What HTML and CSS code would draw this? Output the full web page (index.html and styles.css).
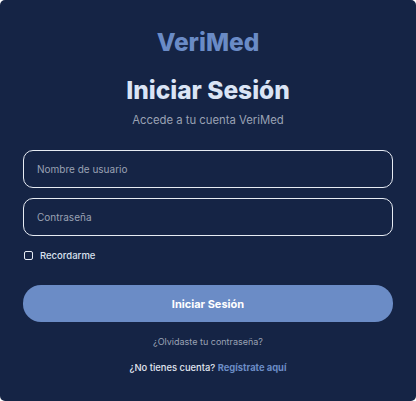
FILE: index.html
```html
<!DOCTYPE html>
<html lang="es">
<head>
<meta charset="utf-8">
<link rel="stylesheet" href="styles.css">
</head>
<body>
<div class="card">
  <div class="brand">VeriMed</div>
  <h1 class="title">Iniciar Sesión</h1>
  <p class="subtitle">Accede a tu cuenta VeriMed</p>
  <form class="form">
    <div class="field"><span class="placeholder">Nombre de usuario</span></div>
    <div class="field"><span class="placeholder">Contraseña</span></div>
    <label class="remember"><span class="box"></span>Recordarme</label>
    <button type="button" class="btn">Iniciar Sesión</button>
  </form>
  <p class="forgot">¿Olvidaste tu contraseña?</p>
  <p class="signup">¿No tienes cuenta? <a class="link">Regístrate aquí</a></p>
</div>
</body>
</html>
```
FILE: styles.css
```css
* { box-sizing: border-box; }
html, body { margin: 0; padding: 0; background: #ffffff; }
body { font-family: Inter, "Noto Sans", sans-serif; }
.card {
  width: 416px;
  height: 401px;
  background: #152445;
  border-radius: 5px;
  padding: 27px 23px 0;
  display: flex;
  flex-direction: column;
  align-items: stretch;
}
.brand {
  text-align: center;
  font-size: 24.5px;
  font-weight: 800;
  color: #6a8bc6;
  line-height: 30px;
}
.title {
  margin: 18px 0 0;
  text-align: center;
  font-size: 24.5px;
  font-weight: 800;
  color: #dae4f5;
  line-height: 30px;
}
.subtitle {
  margin: 8px 0 0;
  text-align: center;
  font-size: 11.3px;
  color: #9aa2b4;
  line-height: 14px;
}
.form {
  margin-top: 23px;
  display: flex;
  flex-direction: column;
}
.field {
  height: 38px;
  border: 1px solid #e6ebf3;
  border-radius: 10px;
  padding: 0 13px;
  display: flex;
  align-items: center;
  margin-bottom: 10px;
}
.placeholder {
  font-size: 10px;
  color: #9aa2b4;
}
.remember {
  display: flex;
  align-items: center;
  gap: 7px;
  font-size: 9.5px;
  font-weight: 500;
  color: #d9e1ef;
  margin-top: 2px;
  height: 15px;
}
.box {
  width: 9px;
  height: 9px;
  border: 1px solid #e6ebf3;
  border-radius: 2px;
  margin-left: 1px;
}
.btn {
  margin-top: 22px;
  height: 37px;
  border: none;
  border-radius: 18px;
  background: #6b8cc6;
  color: #ffffff;
  font-family: inherit;
  font-size: 11px;
  font-weight: 700;
}
.forgot {
  margin: 14px 0 0;
  text-align: center;
  font-size: 9px;
  color: #9aa2b4;
  line-height: 12px;
}
.signup {
  margin: 14px 0 0;
  text-align: center;
  font-size: 9.4px;
  font-weight: 500;
  color: #e2e8f2;
  line-height: 12px;
}
.link {
  color: #6b8cc6;
  font-weight: 700;
}
```
